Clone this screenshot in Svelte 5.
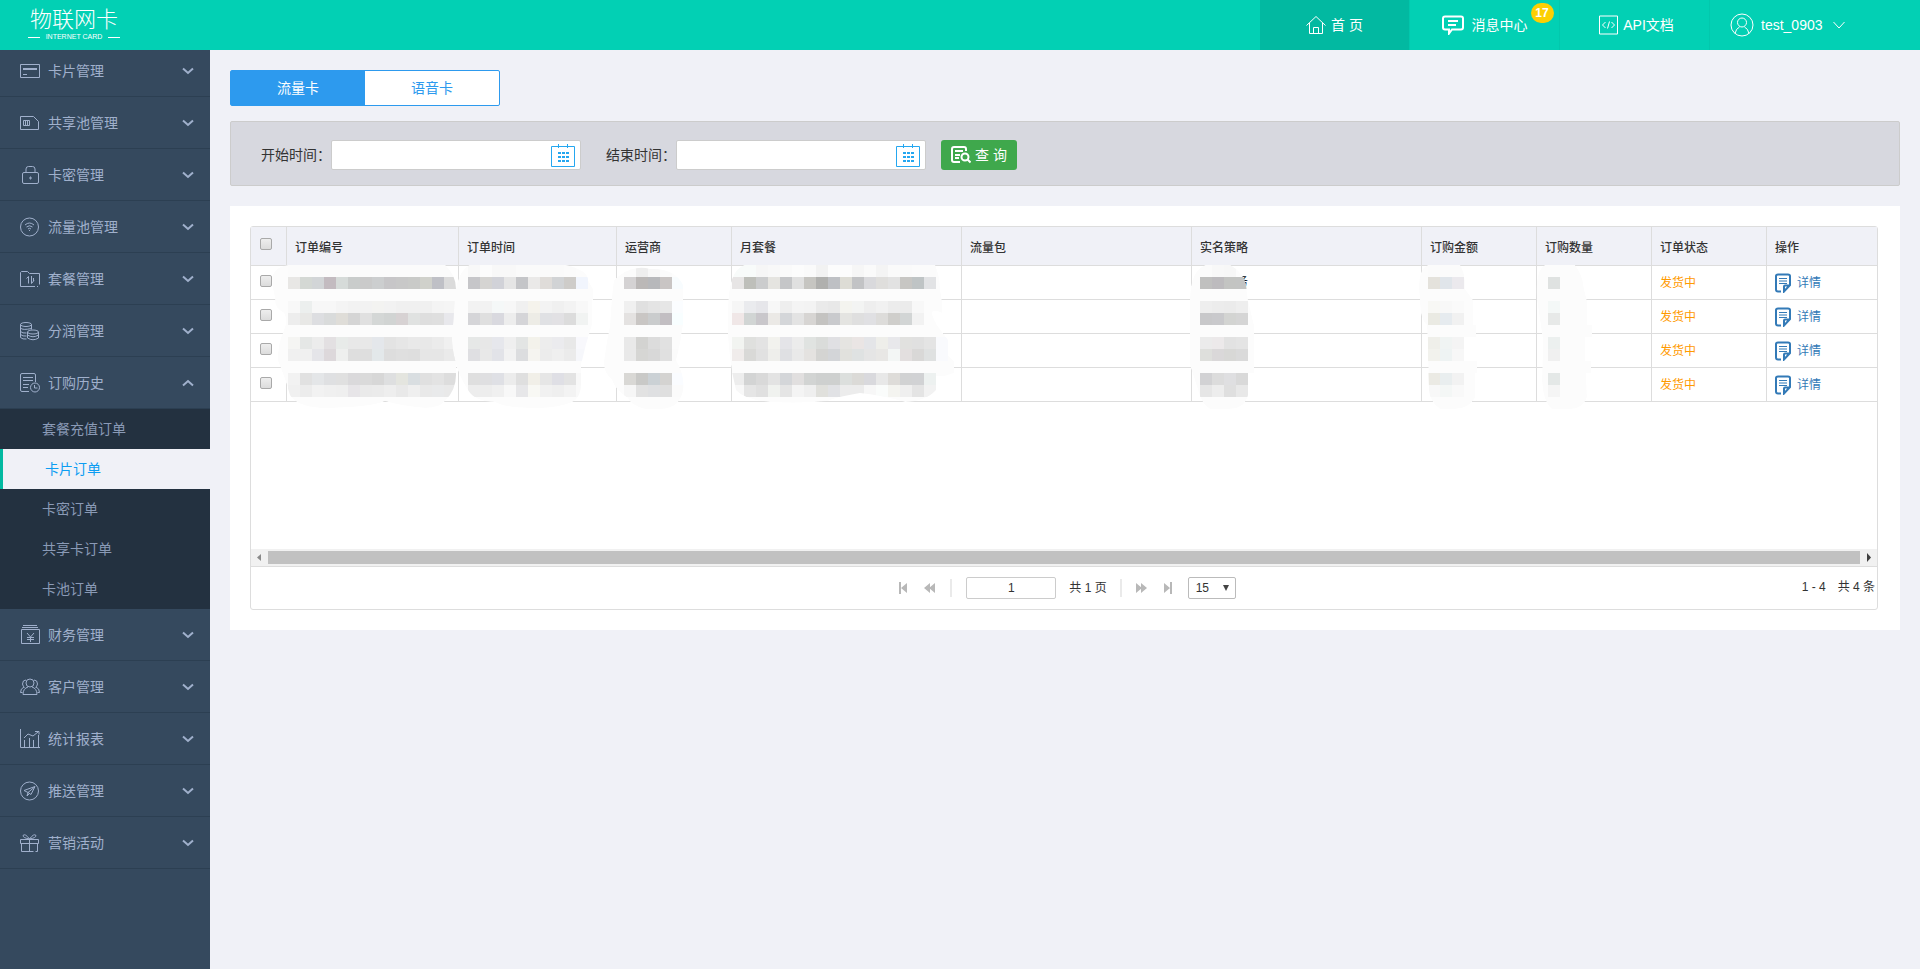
<script lang="ts">
	type MenuItem = {
		label: string;
		icon: string;
		children?: string[];
	};

	const menu: MenuItem[] = [
		{ label: '卡片管理', icon: 'M.5 3.5h19v13H.5zM3 7.5h14M3 8.5h14M3 13.5h4' },
		{
			label: '共享池管理',
			icon: 'M.5 3.5h13l5 5v8H.5zM3.5 7.5h6v5h-6zM5.5 7.5v5M7.5 7.5v5'
		},
		{
			label: '卡密管理',
			icon: 'M4 7.5h13q1.5 0 1.5 1.5v8q0 1.5-1.5 1.5H4q-1.5 0-1.5-1.5V9q0-1.5 1.5-1.5zM6 7V4q0-2.5 2.5-2.5h4Q15 1.5 15 4v3M10 12h1v2h-1z'
		},
		{
			label: '流量池管理',
			icon: 'M.5 10a9 9 0 1 0 18 0a9 9 0 1 0-18 0M5 8q4.5-4 9 0M6.5 10q3-2.5 6 0M8 12q1.5-1.5 3 0M9.5 13v1'
		},
		{
			label: '套餐管理',
			icon: 'M15 17.5H.5v-14l1-1h6l2 2h10v11M17 17.5h1M6.5 9.5l2-2v7M11.500 7v7.5l2.500-3M13.5 9v3'
		},
		{
			label: '分润管理',
			icon: 'M.5 3.5a5.5 2 0 1 0 11 0a5.5 2 0 1 0-11 0M.5 3.5v13q2 2 6 1.5M11.5 3.5v5M.5 7q2 2.5 11 .5M.5 10.5q2 2 6 1.5M.5 13.5q2 2 6 1.5M7.5 11a5.5 2 0 1 0 11 0a5.5 2 0 1 0-11 0M7.5 11v6q5.5 3.5 11 0v-6M7.5 14q5.5 3.5 11 0'
		},
		{
			label: '订购历史',
			icon: 'M9 18.5H2q-1.5 0-1.5-1.5V2Q.5.5 2 .5h12q1.5 0 1.5 1.5v7M3 4.5h10M3 7.5h10M3 11.5h6M3 14.5h5M10.5 14.5a4.5 4.5 0 1 0 9 0a4.5 4.5 0 1 0-9 0M14.5 12v3h3',
			children: ['套餐充值订单', '卡片订单', '卡密订单', '共享卡订单', '卡池订单']
		},
		{
			label: '财务管理',
			icon: 'M3 .5h14M2 2.5h16M1.5 4.5h18v14h-18zM7 8l3.5 4L14 8M10.5 12v5M7 12.5h7M7 14.5h7'
		},
		{
			label: '客户管理',
			icon: 'M6 6a4 4 0 1 0 8 0a4 4 0 1 0-8 0M3 17.5q0-6 5-7.5M17 17.5q0-6-5-7.5M3 17.5h14M6 3Q2.500 3 2.500 7q.5 2.500 2 3.500M4 10Q.5 11.500.5 15.500h2M14 3q3.500 0 3.500 4-.5 2.500-2 3.500M16 10q3.500 1.500 3.500 5.500h-2'
		},
		{
			label: '统计报表',
			icon: 'M.5 0v18.500H20M4.500 18v-7M9.500 18v-9M13.500 18v-7M18.500 18V6M4 9l4-4 5 2 5-4M15 2.500h4v3'
		},
		{
			label: '推送管理',
			icon: 'M.5 10a9 9 0 1 0 18 0a9 9 0 1 0-18 0M4 9.5l11-4-4 8-3-2zM8 11.5l6-5M8 11.5l-1 3.500 2.500-2.500'
		},
		{
			label: '营销活动',
			icon: 'M.5 6.5h18v4H.5zM1.5 10.5v8h12M17.5 10.5v8h-2M9.5 6.5v12M9.5 6Q3 5 3 2.5 5 0 9.5 6M9.5 6q6.5-1 6.5-3.5Q14 0 9.5 6'
		}
	];

	const columns = [
		{ label: '订单编号', width: 172 },
		{ label: '订单时间', width: 158 },
		{ label: '运营商', width: 115 },
		{ label: '月套餐', width: 230 },
		{ label: '流量包', width: 230 },
		{ label: '实名策略', width: 230 },
		{ label: '订购金额', width: 115 },
		{ label: '订购数量', width: 115 },
		{ label: '订单状态', width: 115 },
		{ label: '操作', width: 115 }
	];

	const orders = [1, 2, 3, 4];
	const CELL = 12;
	const TOP = 265;

	// Masked cell contents. A two digit token is a grey level, a six digit one a full colour.
	const masks = [
		{
			x: 288,
			outline:
				'M288 265H445Q456 275 456 289V375Q456 390 445 401 440 408 425 408 400 406 385 401 370 408 320 408 296 406 290 395 284 375 278 361 277 345 284 330 288 320 284 313 274 308 275 298 272 288 272 278 274 267 288 265Z',
			rows: [
				'fb fb fb fb fb fb fb fb fb fb fb fb fb fb',
				'e8e7e5 d4d8d4 d2d5d7 c3bbc0 d6dbd9 c9cccb cacaca cccecf c7c6c8 c8c8c8 c9cac8 d0d1cb bfc0c6 db',
				'',
				'f8 ecefee f7 f7 f4 f2 f2 f3f3f1 f2 f0 f0 f0 f4 f5',
				'ed e8e8e6 dddee1 d9dbdb dfddd8 d5 e0 d4d7d6 d1d4d3 d7d2d3 e0e2e1 de df e8e8ec',
				'',
				'f5f5f3 e5e7e6 ec e3e0e2 e8ebe9 e8 e8 e4e7eb e3 e6 e9 e8 eb f0',
				'f0 f0 e5e5e9 ddd8db eeefee de de e3e8ea dd df de e6 e6 ea',
				'',
				'f2 e1 e4e6e8 dfe0e2 e0 dad9db da d7 dedfe0 e4e5df d9dee1 e0 e3 dd',
				'f0 ec f2 f0 ef e7e5e8 ea eb ee e9 ef e9 e9eaeb e9'
			]
		},
		{
			x: 468,
			outline:
				'M470 265H565Q588 270 588 280L593 289V300H592V325Q585 345 581 365V385Q580 400 570 403 555 409 530 408 505 408 495 402 475 402 468 390 458 375 455 360 450 340 453 325L455 295Q458 270 470 265Z',
			rows: [
				'f8 fc f8 f8 fa fa fa fa fb fc',
				'c6c6c9 d5d4d2 d1d2d8 e5 c4c5c8 eae9e8 dfdcd9 d1d3d5 ceccc9 f1f5fd',
				'',
				'f2 f2 f5f8f8 f7 f0 f5f3ec f3 f0 f3 f8',
				'd5d5d8 df d9d9df ed d5d5d8 edece6 e0e1e4 e2e1e4 dc f1f3f2',
				'',
				'e6e8e7 e7 e6e7ec ef e3e5e4 f3f2eb ed ebebee e8 f8f8fc',
				'dfdfe2 e8 e2e3e8 f2 dcdddf f5f4f0 ec ef eb f6f7fb',
				'',
				'dfdfdf dfdfe1 dfe0e5 ec df f1efe8 e6 dfdfe5 e3 f8',
				'ed ed f0 f8 e7e7e9 f8f8f4 f1 ef f3 f9'
			]
		},
		{
			x: 624,
			outline:
				'M620 275Q635 265 650 269 675 268 683 285V325Q680 345 676 360 685 375 683 390 680 409 660 409H645Q630 405 628 398 615 390 612 380 603 372 604 361 606 345 610 325 612 290 614 280Z',
			rows: [
				'fb ee f7 fb fd',
				'd4d2d3 bbb8b7 b7b8bb c9c5c4 f8fcfe',
				'',
				'f0 e0 e4 e6 fbfdff',
				'e4e2e1 c9c6c4 cacccd c2bec2 f8feff',
				'',
				'e9 d3d3d1 dc e1 fc',
				'e9 d6d6d4 d8 e0 fb',
				'',
				'd9d8d5 c9c9c7 cbd1d5 d4d3d1 fafcff',
				'f6 e2 dfe0e2 df fb'
			]
		},
		{
			x: 732,
			outline:
				'M745 265H935Q940 275 940 289L942 301V313Q925 305 937 325L948 340V355L954 361V373L945 376H936V390Q925 402 905 402 880 395 860 393 840 396 828 401 800 404 770 402 745 400 736 390 726 350 728 310 728 270 745 265Z',
			rows: [
				'f8fbfa f8fbfa f6 f8 fa fc fa f2 fc fc f6 fa f4 fa fa fb fb',
				'e7e5e5 bebfba cbcccd e5e4e0 c5c6c8 e0 c6c5c1 b0b0ae bec0c4 dddcd5 c2c3c5 d9d9dc dfdedc e2 c7c6c3 bfc4c5 e2e3e5',
				'',
				'f6 eaebee e6e6ea f7 ee f4 f3 ea e8 f4f4ef f3f4f3 ee f1 ec eb f8 fc',
				'f0e7e7 d1d5d4 c9c7cb ebe9e6 d4d6d9 e3 d7d5d3 c4c3c1 c9cacd e4e4e1 df e0e0e3 dddcda cfcecb d2d5d5 f2 fc',
				'',
				'f2f4f1 dfe0de e3 f2f2ee e4e4e8 ec e0e3e1 dadcda e0e0e3 e5e4e1 eae5e4 e4e5e8 eeeeea e8e8eb e1e1df e0 e4 f9fafd',
				'f0eceb d9d9d7 e1 eeeeeb dfe0e3 e9 e4e2e0 d4d4d2 d3d5d8 e1e1dd dfe2e2 e5 e8e7e5 f3f6f5 e3dfdf d9d8d7 dfe1e1 f9fafd',
				'',
				'ed d3d4d4 d9 e3 d4d6d9 e1dfdf d2d4d3 ced0cf ced0cf dcdfdd dbdad7 d9d9dd e8 dedcd9 d1d2d3 d1d2d4 edf1f0',
				'f8 e5 e0 f0f2ef e5 f4 ef e0e0dc e1e2e5 ec ec f7 fafcfb f4f4f0 ef e4 f2'
			]
		},
		{
			x: 1200,
			outline:
				'M1206 265H1230Q1243 272 1246 285L1248 300 1254 325V373H1248V395Q1245 409 1228 409H1210Q1202 405 1198 390L1190 365V300Q1190 270 1206 265Z',
			rows: [
				'fb f8 f7 fc',
				'c0c0bf bdbbbe c3c4c2 c3c4c3',
				'',
				'ee ec eb ee',
				'c8c8ca c9c9cc d3d4d2 d5',
				'',
				'eb ece9ea e2 e4',
				'dedfdc dad8d9 d8d8d6 da',
				'',
				'd2d2d4 dc dfdfe1 d9',
				'e6 ed df e8'
			]
		},
		{
			x: 1428,
			outline:
				'M1428 265H1460Q1466 275 1465 289L1473 300V325H1476V337H1464V361H1477V373H1475V398Q1468 409 1455 409H1440Q1430 402 1429 390L1427 325Q1420 320 1420 300 1416 270 1428 265Z',
			rows: [
				'fb fb fb',
				'e4e2dc e0e5ea ebe9ed',
				'',
				'f8f8f5 f8 fa',
				'eaeae3 e6ebef f1',
				'',
				'efefea f0f4f3 f4',
				'f2f2ed eef3f3 f7',
				'',
				'ebeae4 e9eeef f2',
				'f8 f4f7f6 f9'
			]
		},
		{
			x: 1548,
			outline:
				'M1545 265H1575Q1583 275 1584 289L1587 301V325H1592V337H1585V361H1591V373H1586L1587 397Q1583 409 1570 409H1552Q1543 402 1542 380L1543 340 1537 300Q1535 270 1545 265Z',
			rows: ['fc', 'dfe2e1', '', 'f4f8f7', 'e7e9e8', '', 'ecf0ef', 'f0', '', 'e4e8e7', 'f5']
		}
	];

	const tint = (token: string) => '#' + (token.length === 2 ? token.repeat(3) : token);

	let opened = $state('订购历史');
	let current = $state('卡片订单');
	let tab = $state('流量卡');
	let begin = $state('');
	let end = $state('');
	let checked = $state([false, false, false, false]);

	function toggleAll(event: Event) {
		const on = (event.currentTarget as HTMLInputElement).checked;
		checked = checked.map(() => on);
	}
</script>

{#snippet calendar()}
	<svg width="24" height="24" viewBox="0 0 24 24" fill="none" stroke="#25a7f0">
		<path d="M.5 3.5h23v20H.5zM7.5 1v4M16.5 1v4" />
		<path d="M7 10h11M7 14h11M7 18h11" stroke-width="2" stroke-dasharray="3 1" />
	</svg>
{/snippet}

<header>
	<a class="logo" href="#home">
		<strong>物联网卡</strong>
		<small>INTERNET CARD</small>
	</a>
	<nav class="top">
		<a class="active" href="#home">
			<svg width="20" height="20" viewBox="0 0 20 20">
				<path d="M.5 10.5l9.5-9 9.5 9M3.500 8v10.500h13V8M7.500 18.500v-6h5v6" />
			</svg>
			<span>首 页</span>
		</a>
		<a href="#message">
			<svg width="22" height="20" viewBox="0 0 22 20">
				<path
					d="M3 1.5h16q2 0 2 2v9q0 2-2 2H10l-3 4v-4H3q-2 0-2-2v-9q0-2 2-2zM6 6h10M6 10h8"
					stroke-width="2"
				/>
			</svg>
			<span class="message">消息中心<i class="badge">17</i></span>
		</a>
		<a class="api" href="#api">
			<svg width="19" height="20" viewBox="0 0 19 20">
				<path d="M.5 1h18v18H.5zM6.500 7L3.500 10l3 3M12.500 7l3 3-3 3M10.500 6.500l-2 7" />
			</svg>
			<span>API文档</span>
		</a>
		<a class="user" href="#account">
			<svg width="24" height="24" viewBox="0 0 24 24">
				<circle cx="12" cy="12" r="11" />
				<path d="M7.5 9.5a4.5 4.5 0 1 0 9 0a4.5 4.5 0 1 0-9 0M5 20.5q1-5 4.500-6.500M19 20.500q-1-5-4.500-6.500" />
			</svg>
			<span>test_0903</span>
			<svg width="12" height="8" viewBox="0 0 12 8"><path d="M.5 1L6 7l5.500-6" /></svg>
		</a>
	</nav>
</header>

<div class="layout">
	<aside>
		<ul class="menu">
			{#each menu as item}
				<li>
					<button
						class="item"
						aria-expanded={opened === item.label}
						onclick={() => (opened = opened === item.label ? '' : item.label)}
					>
						<svg width="20" height="20" viewBox="0 0 20 20"><path d={item.icon} /></svg>
						<span>{item.label}</span>
						<svg class="arrow" width="12" height="8" viewBox="0 0 12 8">
							<path d="M1 1.5l5 4.500 5-4.500" />
						</svg>
					</button>
					{#if item.children && opened === item.label}
						<ul class="sub">
							{#each item.children as child}
								<li>
									<a href="#order" class:current={current === child} onclick={() => (current = child)}>{child}</a>
								</li>
							{/each}
						</ul>
					{/if}
				</li>
			{/each}
		</ul>
	</aside>

	<main>
		<div class="tabs">
			{#each ['流量卡', '语音卡'] as name}
				<button class:on={tab === name} onclick={() => (tab = name)}>{name}</button>
			{/each}
		</div>

		<form class="search" onsubmit={(e) => e.preventDefault()}>
			<label for="begin">开始时间：</label>
			<div class="date">
				<input id="begin" type="text" bind:value={begin} />
				<button type="button" aria-label="开始时间">{@render calendar()}</button>
			</div>
			<label for="end">结束时间：</label>
			<div class="date">
				<input id="end" type="text" bind:value={end} />
				<button type="button" aria-label="结束时间">{@render calendar()}</button>
			</div>
			<button class="query" type="submit">
				<svg width="20" height="18" viewBox="0 0 20 18" fill="none" stroke="#fff" stroke-width="2">
					<path d="M9 16H3q-2 0-2-2V3q0-2 2-2h10q2 0 2 2v2M4 5h8M4 9h5M4 12h4" />
					<circle cx="14" cy="11" r="3.5" />
					<path d="M16.5 13.5l3 3" />
				</svg>
				<span>查 询</span>
			</button>
		</form>

		<section class="card">
			<div class="grid">
				<div class="view">
					<table>
						<colgroup>
							<col style:width="36px" />
							{#each columns as column}
								<col style:width={`${column.width}px`} />
							{/each}
						</colgroup>
						<thead>
							<tr>
								<th class="pick">
									<input type="checkbox" aria-label="全选" checked={checked.every(Boolean)} onchange={toggleAll} />
								</th>
								{#each columns as column}
									<th>{column.label}</th>
								{/each}
							</tr>
						</thead>
						<tbody>
							{#each orders as order, index}
								<tr>
									<td class="pick">
										<input type="checkbox" aria-label={`选择 ${order}`} bind:checked={checked[index]} />
									</td>
									{#each columns.slice(0, 8) as _}
										<td></td>
									{/each}
									<td class="state">发货中</td>
									<td>
										<a class="detail" href="#detail">
											<svg width="16" height="20" viewBox="0 0 16 20" fill="none" stroke="#337ab7">
												<path
													d="M6 18.5H3q-2 0-2-2V3q0-1.500 2-1.500h10q2 0 2 1.500v9l-6 6.500v-5q0-1 1-1h5"
													stroke-width="2"
												/>
												<path d="M4 5.5h8M4 8h8M4 10.5h8" />
											</svg>
											<span>详情</span>
										</a>
									</td>
								</tr>
							{/each}
						</tbody>
					</table>

					<svg class="masks" width="1630" height="190" viewBox="251 227 1630 190">
						<text x="1236" y="286">务</text>
						{#each masks as mask, m}
							<clipPath id={`mask-${m}`}><path d={mask.outline} /></clipPath>
							<g clip-path={`url(#mask-${m})`}>
								<path d={mask.outline} fill="#fcfcfc" />
								{#each mask.rows as row, r}
									{#each row.split(' ').filter(Boolean) as token, c}
										<rect
											x={mask.x + c * CELL}
											y={TOP + r * CELL}
											width={CELL}
											height={CELL}
											fill={tint(token)}
										/>
									{/each}
								{/each}
							</g>
						{/each}
					</svg>
				</div>

				<div class="scroll">
					<svg width="17" height="17" viewBox="0 0 17 17"><path d="M10 5v7L6 8.5z" fill="#8a8a8a" /></svg>
					<div class="thumb"></div>
					<svg width="17" height="17" viewBox="0 0 17 17"><path d="M7 4v9l4-4.500z" fill="#404040" /></svg>
				</div>

				<footer>
					<div class="pager">
						<button aria-label="首页">
							<svg width="12" height="12" viewBox="0 0 12 12"><path d="M1 0h2v12H1zM9 1v10L3 6z" /></svg>
						</button>
						<button aria-label="上一页">
							<svg width="12" height="12" viewBox="0 0 12 12"><path d="M6 1v10L0 6zM11 1v10L5 6z" /></svg>
						</button>
						<i class="line"></i>
						<input type="text" value="1" aria-label="页码" />
						<span class="total">共 1 页</span>
						<i class="line"></i>
						<button aria-label="下一页">
							<svg width="12" height="12" viewBox="0 0 12 12"><path d="M0 1v10l6-5zM5 1v10l6-5z" /></svg>
						</button>
						<button aria-label="末页">
							<svg width="12" height="12" viewBox="0 0 12 12"><path d="M8 0h2v12H8zM2 1v10l6-5z" /></svg>
						</button>
						<div class="size">
							<select aria-label="每页条数">
								<option>15</option>
								<option>30</option>
								<option>50</option>
							</select>
							<svg width="6" height="6" viewBox="0 0 6 6"><path d="M0 0h6L3 6z" fill="#444" /></svg>
						</div>
					</div>
					<div class="count"><span>1 - 4</span><span>共 4 条</span></div>
				</footer>
			</div>
		</section>
	</main>
</div>

<style>
	:global(body) {
		background: #f0f1f7;
		color: #333;
		font: 14px/20px 'Liberation Sans', 'Noto Sans CJK SC', sans-serif;
	}

	:global(#app) {
		display: flex;
		min-height: 100vh;
		flex-direction: column;
	}

	* {
		box-sizing: border-box;
	}

	a {
		color: inherit;
		text-decoration: none;
	}

	button,
	input,
	select {
		margin: 0;
		padding: 0;
		border: 0;
		background: none;
		color: inherit;
		font: inherit;
	}

	button {
		cursor: pointer;
	}

	svg {
		display: block;
		flex: none;
	}

	ul {
		margin: 0;
		padding: 0;
		list-style: none;
	}

	header {
		position: relative;
		z-index: 1;
		display: flex;
		height: 50px;
		justify-content: space-between;
		background: #02d0b4;
		color: #fff;
	}

	.logo {
		display: flex;
		width: 148px;
		padding-top: 7px;
		flex-direction: column;
		align-items: center;
	}

	.logo strong {
		font-size: 22px;
		font-weight: 300;
		line-height: 25px;
	}

	.logo small {
		display: flex;
		gap: 6px;
		align-items: center;
		font-size: 7px;
		line-height: 10px;
		white-space: nowrap;
	}

	.logo small::before,
	.logo small::after {
		width: 12px;
		height: 1px;
		background: #fff;
		content: '';
	}

	.top {
		display: flex;
	}

	.top a {
		display: flex;
		width: 150px;
		gap: 5px;
		align-items: center;
		justify-content: center;
		border-right: 1px solid #02c8ad;
	}

	.top svg {
		fill: none;
		stroke: #fff;
	}

	.top a.active {
		background: #02b9a1;
	}

	.top .api {
		padding-left: 4px;
	}

	.top .user {
		width: 210px;
		padding-left: 20px;
		gap: 7px;
		justify-content: flex-start;
		border-right: 0;
	}

	.top .user svg:last-child {
		margin-left: 3px;
	}

	.message {
		position: relative;
		padding-left: 3px;
	}

	.badge {
		position: absolute;
		top: -12px;
		left: 62px;
		width: 23px;
		border-radius: 10px;
		background: #fccf02;
		font-size: 12px;
		font-style: normal;
		font-weight: 700;
		line-height: 20px;
		text-align: center;
	}

	.layout {
		display: flex;
		flex: 1;
	}

	aside {
		width: 210px;
		flex: none;
		background: #35495e;
		color: #a0b0cc;
	}

	.menu {
		margin-top: -5px;
	}

	.item {
		display: flex;
		width: 100%;
		height: 52px;
		padding: 0 16px 0 20px;
		gap: 8px;
		align-items: center;
		border-bottom: 1px solid #2c3f52;
		text-align: left;
	}

	.item svg {
		fill: none;
		stroke: #a0b0cc;
	}

	.item .arrow {
		margin-left: auto;
		stroke-width: 2;
	}

	.item[aria-expanded='true'] .arrow {
		transform: rotate(180deg);
	}

	.sub {
		background: #233140;
		color: #8a9ab6;
	}

	.sub a {
		display: block;
		padding-left: 42px;
		line-height: 40px;
	}

	.sub .current {
		border-left: 3px solid #02b9a1;
		background: #f0f1f7;
		color: #0c9df2;
	}

	main {
		min-width: 0;
		padding: 20px;
		flex: 1;
	}

	.tabs {
		display: flex;
		width: 270px;
		border: 1px solid #2d9aee;
		border-radius: 2px;
		background: #fff;
		color: #2d9aee;
	}

	.tabs button {
		flex: 1;
		line-height: 34px;
	}

	.tabs .on {
		background: #2d9aee;
		color: #fff;
	}

	.search {
		display: flex;
		margin-top: 15px;
		padding: 18px 30px 15px;
		align-items: center;
		border: 1px solid #ccc;
		border-radius: 2px;
		background: #d7d8df;
	}

	.date {
		display: flex;
		width: 250px;
		height: 30px;
		margin-right: 15px;
		padding-right: 5px;
		align-items: center;
		border: 1px solid #ccc;
		border-radius: 2px;
		background: #fff;
	}

	.date + label {
		margin-left: 10px;
	}

	.date input {
		width: 100%;
		min-width: 0;
		height: 28px;
		padding: 0 8px;
		outline: 0;
	}

	.query {
		display: flex;
		height: 30px;
		padding: 0 10px;
		gap: 4px;
		align-items: center;
		border-radius: 3px;
		background: #3fa84c;
		color: #fff;
	}

	.card {
		margin-top: 20px;
		padding: 20px 22px 20px 20px;
		background: #fff;
	}

	.grid {
		border: 1px solid #ddd;
		border-radius: 3px;
		font-size: 12px;
	}

	.view {
		position: relative;
		height: 322px;
		overflow: hidden;
	}

	table {
		width: 1631px;
		border-spacing: 0;
		table-layout: fixed;
	}

	th,
	td {
		height: 34px;
		padding: 0 8px;
		border-right: 1px solid #ddd;
		border-bottom: 1px solid #ddd;
		text-align: left;
	}

	th {
		height: 39px;
		padding-top: 4px;
		background: #f0f1f7;
		font-weight: 500;
	}

	.pick {
		padding: 0 9px 4px;
	}

	.pick input {
		display: block;
		width: 12px;
		height: 12px;
		border: 1px solid #a9a9a9;
		border-radius: 2px;
		appearance: none;
		background: linear-gradient(#eee, #dcdcdc);
	}

	.pick input:checked {
		background: #2d9aee;
	}

	.state {
		color: #ff9a00;
	}

	.detail {
		display: flex;
		gap: 6px;
		align-items: center;
		color: #337ab7;
	}

	.masks {
		position: absolute;
		top: 0;
		left: 0;
		pointer-events: none;
	}

	.scroll {
		display: flex;
		height: 18px;
		border-bottom: 1px solid #ddd;
		background: #f1f1f1;
	}

	.thumb {
		height: 13px;
		margin-top: 2px;
		flex: 1;
		background: #c1c1c1;
	}

	footer {
		position: relative;
		display: flex;
		height: 42px;
		padding-left: 6px;
		align-items: center;
		justify-content: center;
	}

	.pager {
		display: flex;
		align-items: center;
	}

	.pager button {
		margin-right: 14px;
	}

	.pager button svg {
		fill: #b8b8b8;
	}

	.line {
		width: 2px;
		height: 18px;
		margin-right: 14px;
		background: #eaeaea;
	}

	.pager input {
		width: 90px;
		height: 22px;
		border: 1px solid #ccc;
		border-radius: 2px;
		text-align: center;
	}

	.total {
		margin: 0 13px;
	}

	.size {
		display: flex;
		width: 48px;
		align-items: center;
		border: 1px solid #bbb;
		border-radius: 2px;
	}

	.size select {
		width: 34px;
		height: 20px;
		padding-left: 7px;
		appearance: none;
	}

	.count {
		position: absolute;
		top: 10px;
		right: 2px;
		display: flex;
		gap: 12px;
	}
</style>
